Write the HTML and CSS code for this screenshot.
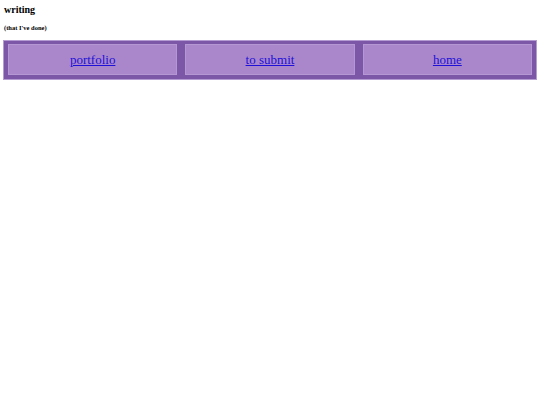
FILE: index.html
```html
<!DOCTYPE html>
<html>
<head>
<meta charset="utf-8">
<link rel="stylesheet" href="styles.css">
</head>
<body>
<h1 class="title">writing</h1>
<h2 class="subtitle">(that I've done)</h2>
<nav class="nav">
  <div class="cell"><a href="#">portfolio</a></div>
  <div class="cell"><a href="#">to submit</a></div>
  <div class="cell"><a href="#">home</a></div>
</nav>
</body>
</html>
```
FILE: styles.css
```css
body {
  margin: 3px;
  font-family: "Liberation Serif", "Times New Roman", serif;
  background: #fff;
}
.title {
  font-size: 10px;
  font-weight: bold;
  margin: 1px 0 0 1px;
  line-height: 12px;
}
.subtitle {
  font-size: 6.5px;
  font-weight: bold;
  margin: 8px 0 0 1px;
  line-height: 8px;
}
.nav {
  margin-top: 8px;
  display: flex;
  gap: 8px;
  padding: 3px 4px 4px;
  background: #7c57a7;
  border: 1px solid #b49bd1;
  width: 534px;
  box-sizing: border-box;
  height: 40px;
}
.cell {
  flex: 1;
  background: #a987ca;
  border: 1px solid #b597d4;
  display: flex;
  align-items: center;
  justify-content: center;
  font-size: 13px;
}
.cell a {
  color: #1e10d8;
}
```
